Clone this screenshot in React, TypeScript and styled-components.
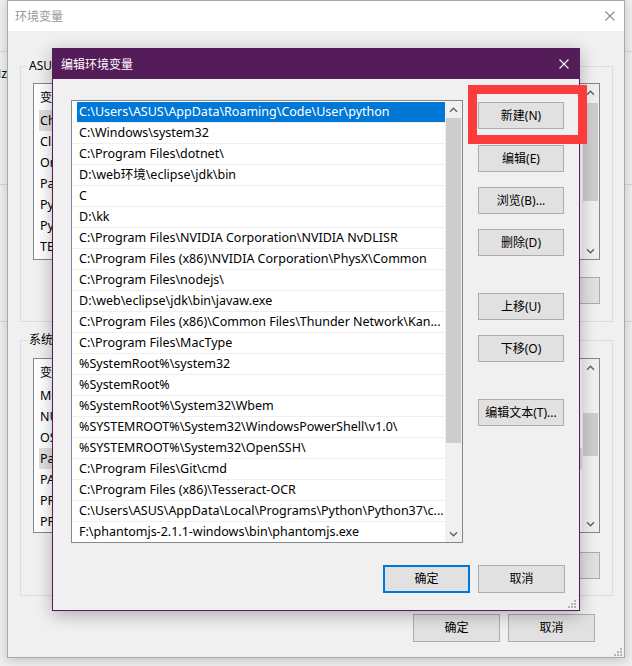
import React from "react";
import styled, { createGlobalStyle } from "styled-components";

const UI_FONT = `"Noto Sans", "Noto Sans CJK SC", sans-serif`;

const GlobalStyle = createGlobalStyle`
  html, body { margin: 0; padding: 0; background: #f0f0f0; }
  body { font-family: ${UI_FONT}; font-size: 12px; color: #000; }
  *, *::before, *::after { box-sizing: border-box; }
`;

/* ---------- desktop & window behind ---------- */

const Desktop = styled.div`
  position: relative;
  width: 632px;
  height: 666px;
  overflow: hidden;
  background: #efefef;
`;

const BehindWindow = styled.div`
  display: flex;
  flex-direction: column;
  width: 100%;
`;

const BehindBand = styled.div<{ $h: number }>`
  height: ${(p) => p.$h}px;
  border-bottom: 1px solid #d4d4d4;
  display: flex;
  align-items: flex-start;
  overflow: hidden;
`;

const BehindText = styled.span`
  margin: 14px 0 0 -8px;
  font-size: 12.5px;
  line-height: 16px;
  color: #000;
  white-space: nowrap;
`;

/* ---------- shared bits ---------- */

const PushButton = styled.button<{ $w: number; $h: number; $mt?: number; $default?: boolean }>`
  flex: none;
  width: ${(p) => p.$w}px;
  height: ${(p) => p.$h}px;
  margin-top: ${(p) => p.$mt ?? 0}px;
  padding: 0;
  background: #e1e1e1;
  border: ${(p) => (p.$default ? "2px solid #0078d7" : "1px solid #adadad")};
  font-family: ${UI_FONT};
  font-size: 12px;
  color: #000;
  line-height: 1;
  white-space: nowrap;
  cursor: default;
`;

const ArrowCell = styled.div`
  height: 17px;
  flex: none;
  display: flex;
  align-items: center;
  justify-content: center;
`;

const Chevron = ({ down }: { down?: boolean }) => (
  <svg width="9" height="6" viewBox="0 0 9 6">
    <polyline
      points={down ? "1,1.2 4.5,4.7 8,1.2" : "1,4.8 4.5,1.3 8,4.8"}
      fill="none"
      stroke="#606060"
      strokeWidth="1.4"
    />
  </svg>
);

const ScrollBar = styled.div`
  width: 17px;
  flex: none;
  display: flex;
  flex-direction: column;
  background: #f0f0f0;
`;

const Track = styled.div`
  flex: 1;
  min-height: 0;
`;

const Thumb = styled.div<{ $top: number; $size: number }>`
  margin-top: ${(p) => p.$top}px;
  height: ${(p) => p.$size}px;
  width: 15px;
  margin-left: 1px;
  background: #cdcdcd;
`;

const VScroll = ({ top, size }: { top: number; size: number }) => (
  <ScrollBar>
    <ArrowCell>
      <Chevron />
    </ArrowCell>
    <Track>
      <Thumb $top={top} $size={size} />
    </Track>
    <ArrowCell>
      <Chevron down />
    </ArrowCell>
  </ScrollBar>
);

const CloseX = ({ color, size = 10 }: { color: string; size?: number }) => (
  <svg width={size} height={size} viewBox="0 0 10 10">
    <path d="M0.5 0.5 L9.5 9.5 M9.5 0.5 L0.5 9.5" stroke={color} strokeWidth="1.1" fill="none" />
  </svg>
);

const GripWrap = styled.div<{ $right: number; $bottom: number }>`
  position: absolute;
  right: ${(p) => p.$right}px;
  bottom: ${(p) => p.$bottom}px;
  width: 9px;
  height: 9px;
  line-height: 0;
`;

const Grip = ({ right, bottom }: { right: number; bottom: number }) => (
  <GripWrap $right={right} $bottom={bottom}>
    <svg width="9" height="9" viewBox="0 0 9 9">
      {[
        [7, 1],
        [4, 4],
        [7, 4],
        [1, 7],
        [4, 7],
        [7, 7],
      ].map(([x, y], i) => (
        <rect key={i} x={x} y={y} width="2" height="2" fill="#b4b4b4" />
      ))}
    </svg>
  </GripWrap>
);

/* ---------- main (background) window ---------- */

const MainWindow = styled.section`
  position: absolute;
  left: 7px;
  top: 0;
  width: 618px;
  height: 658px;
  border: 1px solid #aaaaaa;
  background: #f0f0f0;
  display: flex;
  flex-direction: column;
  box-shadow: 0 2px 10px rgba(0, 0, 0, 0.2);
`;

const MainTitleBar = styled.header`
  height: 30px;
  flex: none;
  background: #ffffff;
  display: flex;
  align-items: center;
  justify-content: space-between;
  padding: 0 9px 0 7px;
  color: #999999;
  font-size: 12px;
`;

const MainBody = styled.div`
  flex: 1;
  display: flex;
  flex-direction: column;
  padding: 27px 11px 0 12px;
`;

const Group = styled.fieldset<{ $pt: number; $pb: number; $mt?: number }>`
  margin: ${(p) => p.$mt ?? 0}px 0 0 0;
  min-width: 0;
  border: 1px solid #dcdcdc;
  padding: ${(p) => p.$pt}px 12px ${(p) => p.$pb}px 12px;
`;

const GroupTitle = styled.legend`
  margin-left: -5px;
  padding: 0 1px;
  font-size: 12px;
  line-height: 16px;
  white-space: nowrap;
`;

const VarList = styled.div<{ $h: number }>`
  height: ${(p) => p.$h}px;
  border: 1px solid #828790;
  background: #ffffff;
  display: flex;
  overflow: hidden;
`;

const VarColumns = styled.div`
  flex: 1;
  min-width: 0;
  display: flex;
  flex-direction: column;
  overflow: hidden;
`;

const VarHeader = styled.div`
  height: 26px;
  flex: none;
  display: flex;
  align-items: center;
  padding-left: 6px;
  font-size: 12px;
`;

const VarRow = styled.div<{ $selected?: boolean }>`
  height: 21px;
  flex: none;
  display: flex;
  align-items: center;
  margin-left: 5px;
  padding-left: 1px;
  font-size: 12.5px;
  background: ${(p) => (p.$selected ? "#e0e0e0" : "transparent")};
  white-space: nowrap;
`;

const NameCell = styled.span`
  width: 170px;
  flex: none;
  overflow: hidden;
`;

const ValueCell = styled.span`
  flex: 1;
  overflow: hidden;
`;

const ButtonRow = styled.div<{ $mt: number }>`
  margin-top: ${(p) => p.$mt}px;
  display: flex;
  justify-content: flex-end;
  gap: 9px;
`;

const MainFooter = styled.div`
  margin-top: 18px;
  padding-right: 18px;
  display: flex;
  justify-content: flex-end;
  gap: 8px;
`;

/* ---------- edit dialog ---------- */

const EditDialog = styled.section`
  position: absolute;
  left: 52px;
  top: 48px;
  width: 528px;
  height: 563px;
  border: 1px solid #551c5a;
  background: #f0f0f0;
  display: flex;
  flex-direction: column;
  box-shadow: 0 4px 16px rgba(0, 0, 0, 0.28);
`;

const DialogTitleBar = styled.header`
  height: 30px;
  flex: none;
  background: #551c5a;
  color: #ffffff;
  display: flex;
  align-items: center;
  justify-content: space-between;
  padding: 0 10px 0 8px;
  font-size: 12px;
`;

const DialogBody = styled.div`
  flex: 1;
  display: flex;
  flex-direction: column;
  padding: 21px 15px 17px 18px;
`;

const DialogMain = styled.div`
  display: flex;
  gap: 15px;
  height: 443px;
`;

const PathList = styled.div`
  width: 392px;
  height: 443px;
  border: 1px solid #828790;
  background: #ffffff;
  display: flex;
  overflow: hidden;
`;

const PathRows = styled.div`
  flex: 1;
  min-width: 0;
  padding-top: 1px;
  display: flex;
  flex-direction: column;
  overflow: hidden;
`;

const PathRow = styled.div`
  height: 21px;
  flex: none;
  border-bottom: 1px solid #f0f0f0;
  padding-left: 5px;
  display: flex;
`;

const PathText = styled.div<{ $selected?: boolean }>`
  flex: 1;
  min-width: 0;
  height: 20px;
  line-height: 20px;
  padding-left: 2px;
  font-size: 12.5px;
  white-space: nowrap;
  overflow: hidden;
  background: ${(p) => (p.$selected ? "#0078d7" : "transparent")};
  color: ${(p) => (p.$selected ? "#ffffff" : "#000000")};
`;

const ButtonColumn = styled.div`
  width: 86px;
  flex: none;
  display: flex;
  flex-direction: column;
`;

const DialogFooter = styled.div`
  margin-top: 22px;
  margin-right: -1px;
  display: flex;
  justify-content: flex-end;
  gap: 8px;
`;

const Highlight = styled.div`
  position: absolute;
  left: 468px;
  top: 85px;
  width: 119px;
  height: 59px;
  border: 9px solid #fd3b3b;
`;

/* ---------- data ---------- */

const userVars: [string, string][] = [
  ["ChocolateyInstall", "C:\\ProgramData\\chocolatey"],
  ["ClassPath", ".;%JAVA_HOME%\\lib"],
  ["OneDrive", "C:\\Users\\ASUS\\OneDrive"],
  ["Path", "C:\\Users\\ASUS\\AppData\\Roaming\\Code\\User\\python;..."],
  ["PyCharm", "D:\\PyCharm\\bin;"],
  ["PyCharm Community Edition", "D:\\PyCharm Community\\bin;"],
  ["TEMP", "%USERPROFILE%\\AppData\\Local\\Temp"],
];

const systemVars: [string, string][] = [
  ["MOZ_PLUGIN_PATH", "C:\\Program Files (x86)\\Foxit Software\\plugins\\"],
  ["NUMBER_OF_PROCESSORS", "8"],
  ["OS", "Windows_NT"],
  ["Path", "C:\\Program Files\\Common Files\\Oracle\\Java\\javapath;..."],
  ["PATHEXT", ".COM;.EXE;.BAT;.CMD;.VBS;.VBE;.JS;.JSE;.WSF;.WSH;.MSC"],
  ["PROCESSOR_ARCHITECTURE", "AMD64"],
  ["PROCESSOR_IDENTIFIER", "Intel64 Family 6 Model 142 Stepping 10"],
];

const paths = [
  "C:\\Users\\ASUS\\AppData\\Roaming\\Code\\User\\python",
  "C:\\Windows\\system32",
  "C:\\Program Files\\dotnet\\",
  "D:\\web环境\\eclipse\\jdk\\bin",
  "C",
  "D:\\kk",
  "C:\\Program Files\\NVIDIA Corporation\\NVIDIA NvDLISR",
  "C:\\Program Files (x86)\\NVIDIA Corporation\\PhysX\\Common",
  "C:\\Program Files\\nodejs\\",
  "D:\\web\\eclipse\\jdk\\bin\\javaw.exe",
  "C:\\Program Files (x86)\\Common Files\\Thunder Network\\Kan...",
  "C:\\Program Files\\MacType",
  "%SystemRoot%\\system32",
  "%SystemRoot%",
  "%SystemRoot%\\System32\\Wbem",
  "%SYSTEMROOT%\\System32\\WindowsPowerShell\\v1.0\\",
  "%SYSTEMROOT%\\System32\\OpenSSH\\",
  "C:\\Program Files\\Git\\cmd",
  "C:\\Program Files (x86)\\Tesseract-OCR",
  "C:\\Users\\ASUS\\AppData\\Local\\Programs\\Python\\Python37\\c...",
  "F:\\phantomjs-2.1.1-windows\\bin\\phantomjs.exe",
];

const sideButtons: { label: string; mt: number }[] = [
  { label: "新建(N)", mt: 2 },
  { label: "编辑(E)", mt: 16 },
  { label: "浏览(B)...", mt: 15 },
  { label: "删除(D)", mt: 15 },
  { label: "上移(U)", mt: 37 },
  { label: "下移(O)", mt: 15 },
  { label: "编辑文本(T)...", mt: 37 },
];

const VarTable = ({
  h,
  rows,
  selected,
  thumbTop,
  thumbSize,
}: {
  h: number;
  rows: [string, string][];
  selected: number;
  thumbTop: number;
  thumbSize: number;
}) => (
  <VarList $h={h}>
    <VarColumns>
      <VarHeader>
        <NameCell>变量</NameCell>
        <ValueCell>值</ValueCell>
      </VarHeader>
      {rows.map(([n, v], i) => (
        <VarRow key={n + i} $selected={i === selected}>
          <NameCell>{n}</NameCell>
          <ValueCell>{v}</ValueCell>
        </VarRow>
      ))}
    </VarColumns>
    <VScroll top={thumbTop} size={thumbSize} />
  </VarList>
);

export default function App() {
  return (
    <Desktop>
      <GlobalStyle />
      <BehindWindow>
        <BehindBand $h={52} />
        <BehindBand $h={133}>
          <BehindText>Hz</BehindText>
        </BehindBand>
        <BehindBand $h={137} />
      </BehindWindow>

      <MainWindow>
        <MainTitleBar>
          <span>环境变量</span>
          <CloseX color="#8a8a8a" />
        </MainTitleBar>
        <MainBody>
          <Group $pt={9} $pb={17}>
            <GroupTitle>ASUS 的用户变量(U)</GroupTitle>
            <VarTable h={177} rows={userVars} selected={0} thumbTop={2} thumbSize={98} />
            <ButtonRow $mt={17}>
              <PushButton $w={86} $h={27}>新建(N)...</PushButton>
              <PushButton $w={86} $h={27}>编辑(E)...</PushButton>
              <PushButton $w={86} $h={27}>删除(D)</PushButton>
            </ButtonRow>
          </Group>
          <Group $pt={10} $pb={16} $mt={10}>
            <GroupTitle>系统变量(S)</GroupTitle>
            <VarTable h={175} rows={systemVars} selected={3} thumbTop={37} thumbSize={43} />
            <ButtonRow $mt={19}>
              <PushButton $w={86} $h={27}>新建(W)...</PushButton>
              <PushButton $w={86} $h={27}>编辑(I)...</PushButton>
              <PushButton $w={86} $h={27}>删除(L)</PushButton>
            </ButtonRow>
          </Group>
          <MainFooter>
            <PushButton $w={87} $h={28}>确定</PushButton>
            <PushButton $w={87} $h={28}>取消</PushButton>
          </MainFooter>
        </MainBody>
        <Grip right={2} bottom={1} />
      </MainWindow>

      <EditDialog>
        <DialogTitleBar>
          <span>编辑环境变量</span>
          <CloseX color="#ffffff" />
        </DialogTitleBar>
        <DialogBody>
          <DialogMain>
            <PathList>
              <PathRows>
                {paths.map((p, i) => (
                  <PathRow key={i}>
                    <PathText $selected={i === 0}>{p}</PathText>
                  </PathRow>
                ))}
              </PathRows>
              <VScroll top={0} size={325} />
            </PathList>
            <ButtonColumn>
              {sideButtons.map((b) => (
                <PushButton key={b.label} $w={86} $h={27} $mt={b.mt}>
                  {b.label}
                </PushButton>
              ))}
            </ButtonColumn>
          </DialogMain>
          <DialogFooter>
            <PushButton $w={87} $h={28} $default>
              确定
            </PushButton>
            <PushButton $w={87} $h={28}>取消</PushButton>
          </DialogFooter>
        </DialogBody>
        <Grip right={3} bottom={2} />
      </EditDialog>

      <Highlight />
    </Desktop>
  );
}
